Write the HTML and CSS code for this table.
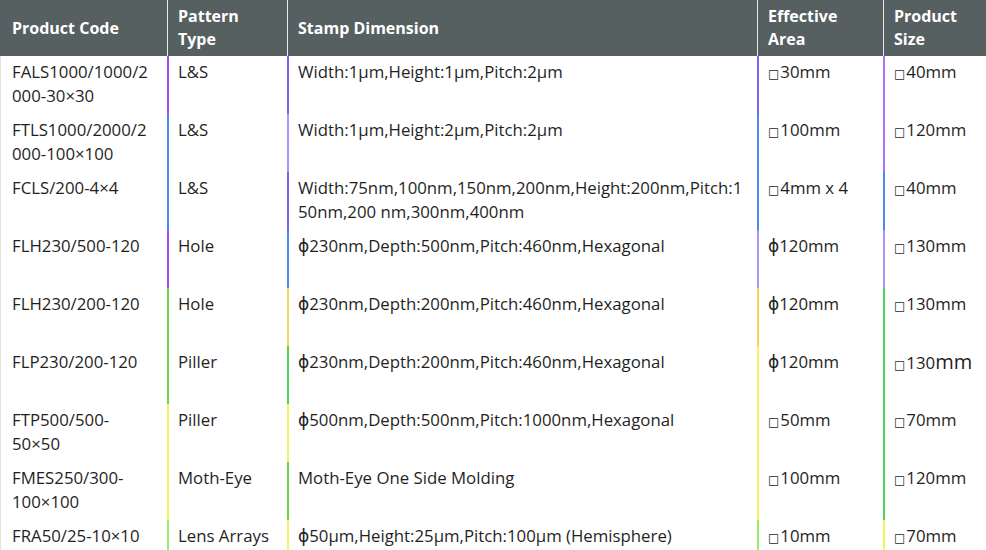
FILE: index.html
```html
<!DOCTYPE html>
<html>
<head>
<meta charset="utf-8">
<link rel="stylesheet" href="styles.css">
</head>
<body>
<table class="spec">
  <colgroup>
    <col class="c1"><col class="c2"><col class="c3"><col class="c4"><col class="c5">
  </colgroup>
  <thead>
    <tr>
      <th class="first">Product Code</th>
      <th>Pattern<br>Type</th>
      <th>Stamp Dimension</th>
      <th>Effective<br>Area</th>
      <th>Product<br>Size</th>
    </tr>
  </thead>
  <tbody>
    <tr>
      <td class="first">FALS1000/1000/2<br>000-30×30</td>
      <td class="b-p1">L&amp;S</td>
      <td class="b-p2">Width:1μm,Height:1μm,Pitch:2μm</td>
      <td class="b-p2"><span class="sq">□</span>30mm</td>
      <td class="b-pu"><span class="sq">□</span>40mm</td>
    </tr>
    <tr>
      <td class="first">FTLS1000/2000/2<br>000-100×100</td>
      <td class="b-blue">L&amp;S</td>
      <td class="b-lav">Width:1μm,Height:2μm,Pitch:2μm</td>
      <td class="b-blue"><span class="sq">□</span>100mm</td>
      <td class="b-pu"><span class="sq">□</span>120mm</td>
    </tr>
    <tr>
      <td class="first">FCLS/200-4×4</td>
      <td class="b-blue">L&amp;S</td>
      <td class="b-p2">Width:75nm,100nm,150nm,200nm,Height:200nm,Pitch:1<br>50nm,200 nm,300nm,400nm</td>
      <td class="b-blue"><span class="sq">□</span>4mm x 4</td>
      <td class="b-blue"><span class="sq">□</span>40mm</td>
    </tr>
    <tr>
      <td class="first">FLH230/500-120</td>
      <td class="b-p1">Hole</td>
      <td class="b-blue"><span class="phi">ϕ</span>230nm,Depth:500nm,Pitch:460nm,Hexagonal</td>
      <td class="b-lav"><span class="phi">ϕ</span>120mm</td>
      <td class="b-lav"><span class="sq">□</span>130mm</td>
    </tr>
    <tr>
      <td class="first">FLH230/200-120</td>
      <td class="b-green">Hole</td>
      <td class="b-orange"><span class="phi">ϕ</span>230nm,Depth:200nm,Pitch:460nm,Hexagonal</td>
      <td class="b-orange"><span class="phi">ϕ</span>120mm</td>
      <td class="b-green2"><span class="sq">□</span>130mm</td>
    </tr>
    <tr>
      <td class="first">FLP230/200-120</td>
      <td class="b-green">Piller</td>
      <td class="b-green2"><span class="phi">ϕ</span>230nm,Depth:200nm,Pitch:460nm,Hexagonal</td>
      <td class="b-yellow"><span class="phi">ϕ</span>120mm</td>
      <td class="b-green2"><span class="sq">□</span>130<span class="big">mm</span></td>
    </tr>
    <tr>
      <td class="first">FTP500/500-<br>50×50</td>
      <td class="b-yellow">Piller</td>
      <td class="b-yellow"><span class="phi">ϕ</span>500nm,Depth:500nm,Pitch:1000nm,Hexagonal</td>
      <td class="b-yellow"><span class="sq">□</span>50mm</td>
      <td class="b-green2"><span class="sq">□</span>70mm</td>
    </tr>
    <tr>
      <td class="first">FMES250/300-<br>100×100</td>
      <td class="b-yellow">Moth-Eye</td>
      <td class="b-green">Moth-Eye One Side Molding</td>
      <td class="b-yellow"><span class="sq">□</span>100mm</td>
      <td class="b-green2"><span class="sq">□</span>120mm</td>
    </tr>
    <tr>
      <td class="first">FRA50/25-10×10</td>
      <td class="b-lime">Lens Arrays</td>
      <td class="b-yellow"><span class="phi">ϕ</span>50μm,Height:25μm,Pitch:100μm (Hemisphere)</td>
      <td class="b-lime"><span class="sq">□</span>10mm</td>
      <td class="b-yellow"><span class="sq">□</span>70mm</td>
    </tr>
  </tbody>
</table>
</body>
</html>
```

FILE: styles.css
```css
html, body {
  margin: 0;
  padding: 0;
  background: #ffffff;
}

body {
  font-family: "Open Sans", "Liberation Sans", sans-serif;
  color: #1f1f1f;
  overflow: hidden;
}

.spec {
  width: 986px;
  border-collapse: separate;
  border-spacing: 0;
  table-layout: fixed;
}

.c1 { width: 167px; }
.c2 { width: 120px; }
.c3 { width: 470px; }
.c4 { width: 126px; }
.c5 { width: 103px; }

.spec th {
  background: #566060;
  color: #ffffff;
  font-weight: 700;
  font-size: 16px;
  line-height: 23px;
  text-align: left;
  vertical-align: middle;
  height: 56px;
  padding: 0 10px;
  border-left: 1px solid #e6eaea;
  box-sizing: border-box;
  white-space: nowrap;
}

.spec th.first {
  border-left: none;
  padding-left: 12px;
}

.spec td {
  font-size: 16.8px;
  line-height: 24px;
  vertical-align: top;
  height: 58px;
  padding: 4px 8px 0 9px;
  box-sizing: border-box;
  white-space: nowrap;
  border-left: 2px solid #cccccc;
}

.spec td.first {
  border-left: 1px solid #e2e2e2;
  padding-left: 11px;
}

.sq {
  font-family: "DejaVu Sans", sans-serif;
  font-size: 12px;
  margin-right: 1px;
}

.phi {
  font-family: "DejaVu Sans", sans-serif;
  font-size: 17px;
}

.big {
  font-size: 20px;
}

.spec td.b-p1 { border-left-color: #9a4ff0; }
.spec td.b-p2 { border-left-color: #7d62f2; }
.spec td.b-pu { border-left-color: #b071f4; }
.spec td.b-lav { border-left-color: #ad94fc; }
.spec td.b-blue { border-left-color: #4f88f0; }
.spec td.b-green { border-left-color: #6fcf4b; }
.spec td.b-green2 { border-left-color: #4fd05a; }
.spec td.b-yellow { border-left-color: #f5f45e; }
.spec td.b-orange { border-left-color: #f9d25b; }
.spec td.b-lime { border-left-color: #96ee68; }
```
